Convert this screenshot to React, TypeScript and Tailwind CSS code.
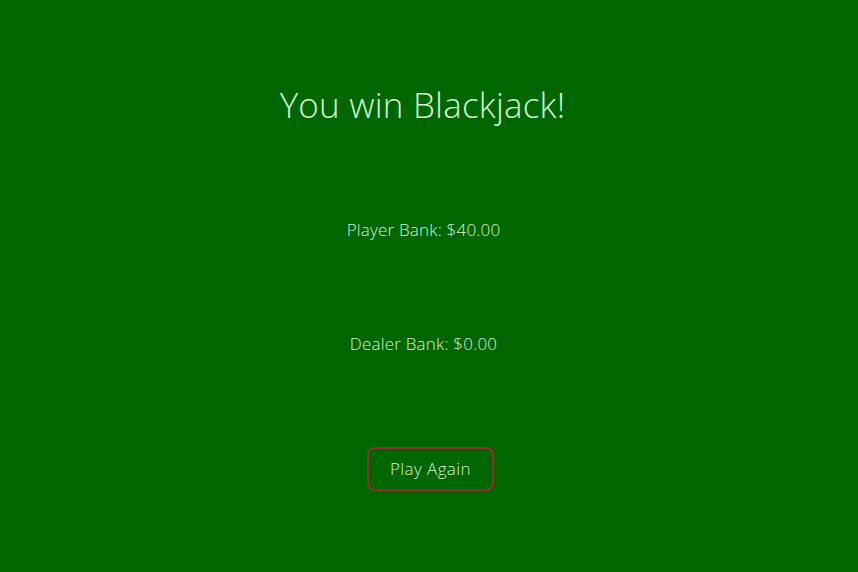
import React from 'react';

export default function App() {
  return (
    <div
      className="min-h-screen w-full bg-[#006600] text-[#d2f2d2] flex flex-col items-center"
      style={{ fontFamily: '"Open Sans", "Liberation Sans", sans-serif' }}
    >
      <h1 className="mt-[84px] pr-[13px] text-[35px] leading-[42px] font-light tracking-[0.2px]">You win Blackjack!</h1>
      <p className="mt-[94px] pr-[11px] text-[17px] leading-[20px] font-light tracking-[0.2px]">Player Bank: $40.00</p>
      <p className="mt-[94px] pr-[11px] text-[17px] leading-[20px] font-light tracking-[0.2px]">Dealer Bank: $0.00</p>
      <button className="mt-[93px] ml-[3px] w-[127px] h-[44px] border-2 border-[#962b36] rounded-lg text-[17px] font-light tracking-[0.4px] text-[#d2f2d2]">
        Play Again
      </button>
    </div>
  );
}
